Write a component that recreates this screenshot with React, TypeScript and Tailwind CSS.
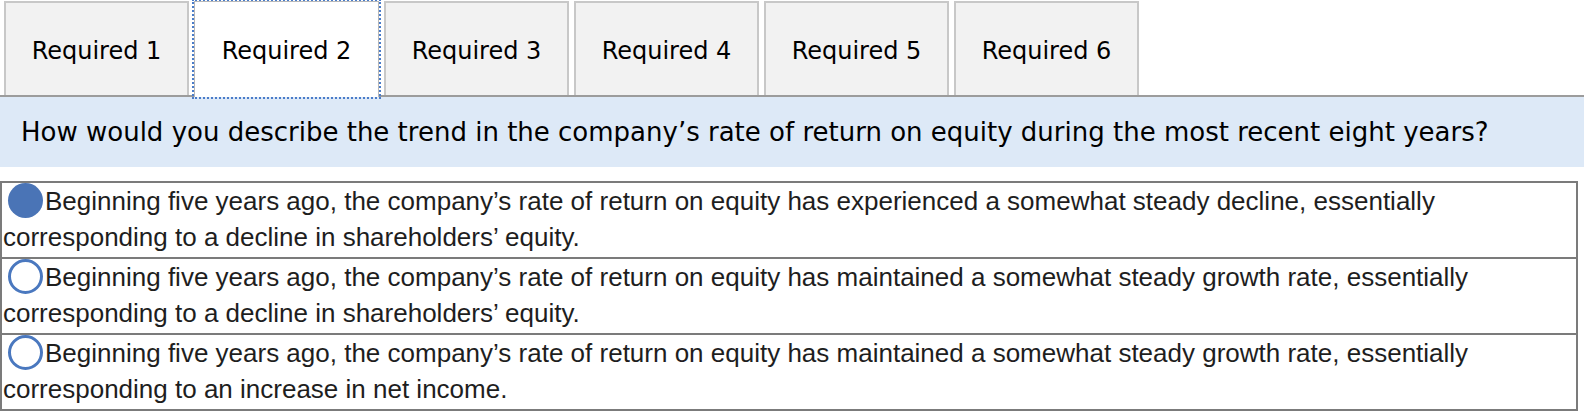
import React, { useState } from 'react';

const tabs = ['Required 1', 'Required 2', 'Required 3', 'Required 4', 'Required 5', 'Required 6'];

const answers = [
  'Beginning five years ago, the company’s rate of return on equity has experienced a somewhat steady decline, essentially corresponding to a decline in shareholders’ equity.',
  'Beginning five years ago, the company’s rate of return on equity has maintained a somewhat steady growth rate, essentially corresponding to a decline in shareholders’ equity.',
  'Beginning five years ago, the company’s rate of return on equity has maintained a somewhat steady growth rate, essentially corresponding to an increase in net income.',
];

const App: React.FC = () => {
  const [activeTab, setActiveTab] = useState(1);
  const [selected, setSelected] = useState(0);

  return (
    <div className="w-[1584px] h-[414px] bg-white overflow-hidden">
      {/* Tab strip */}
      <div className="flex items-end gap-[5px] pl-[4px] h-[97px] border-b-2 border-[#9c9c9c]">
        {tabs.map((t, i) => (
          <button
            key={t}
            onClick={() => setActiveTab(i)}
            className={
              i === activeTab
                ? 'w-[185px] h-[96px] -mb-[2px] pt-[3px] bg-white border border-b-0 border-[#b8b8b8] outline-2 outline-dotted outline-[#4a7cc9] text-[24px] text-black'
                : 'w-[185px] h-[94px] pt-[3px] bg-[#f2f2f2] border-2 border-b-0 border-[#c8c8c8] text-[24px] text-black'
            }
            style={{ fontFamily: '"DejaVu Sans", Verdana, sans-serif' }}
          >
            {t}
          </button>
        ))}
      </div>

      {/* Question */}
      <div
        className="h-[70px] bg-[#dde9f7] flex items-center pl-[21px] text-[26px] text-black"
        style={{ fontFamily: '"DejaVu Sans", Verdana, sans-serif' }}
      >
        How would you describe the trend in the company’s rate of return on equity during the most recent eight years?
      </div>

      {/* Answers */}
      <div
        className="mt-[14px] w-[1578px] border-2 border-[#7b7b7b] text-[26px] leading-[36px] text-[#1e1e1e]"
        style={{ fontFamily: '"Liberation Sans", Arial, sans-serif' }}
      >
        {answers.map((a, i) => (
          <div
            key={i}
            onClick={() => setSelected(i)}
            className={`pl-[1px] pr-[4px] pb-[2px] cursor-pointer ${i < answers.length - 1 ? 'border-b-2 border-[#7b7b7b]' : ''}`}
          >
            <span
              className={`inline-block w-[35px] h-[35px] rounded-full ml-[5px] mr-[2px] align-[-8px] ${
                i === selected ? 'bg-[#4a74b6]' : 'border-[3px] border-[#4a78bf] bg-white'
              }`}
            />
            {a}
          </div>
        ))}
      </div>
    </div>
  );
};

export default App;
